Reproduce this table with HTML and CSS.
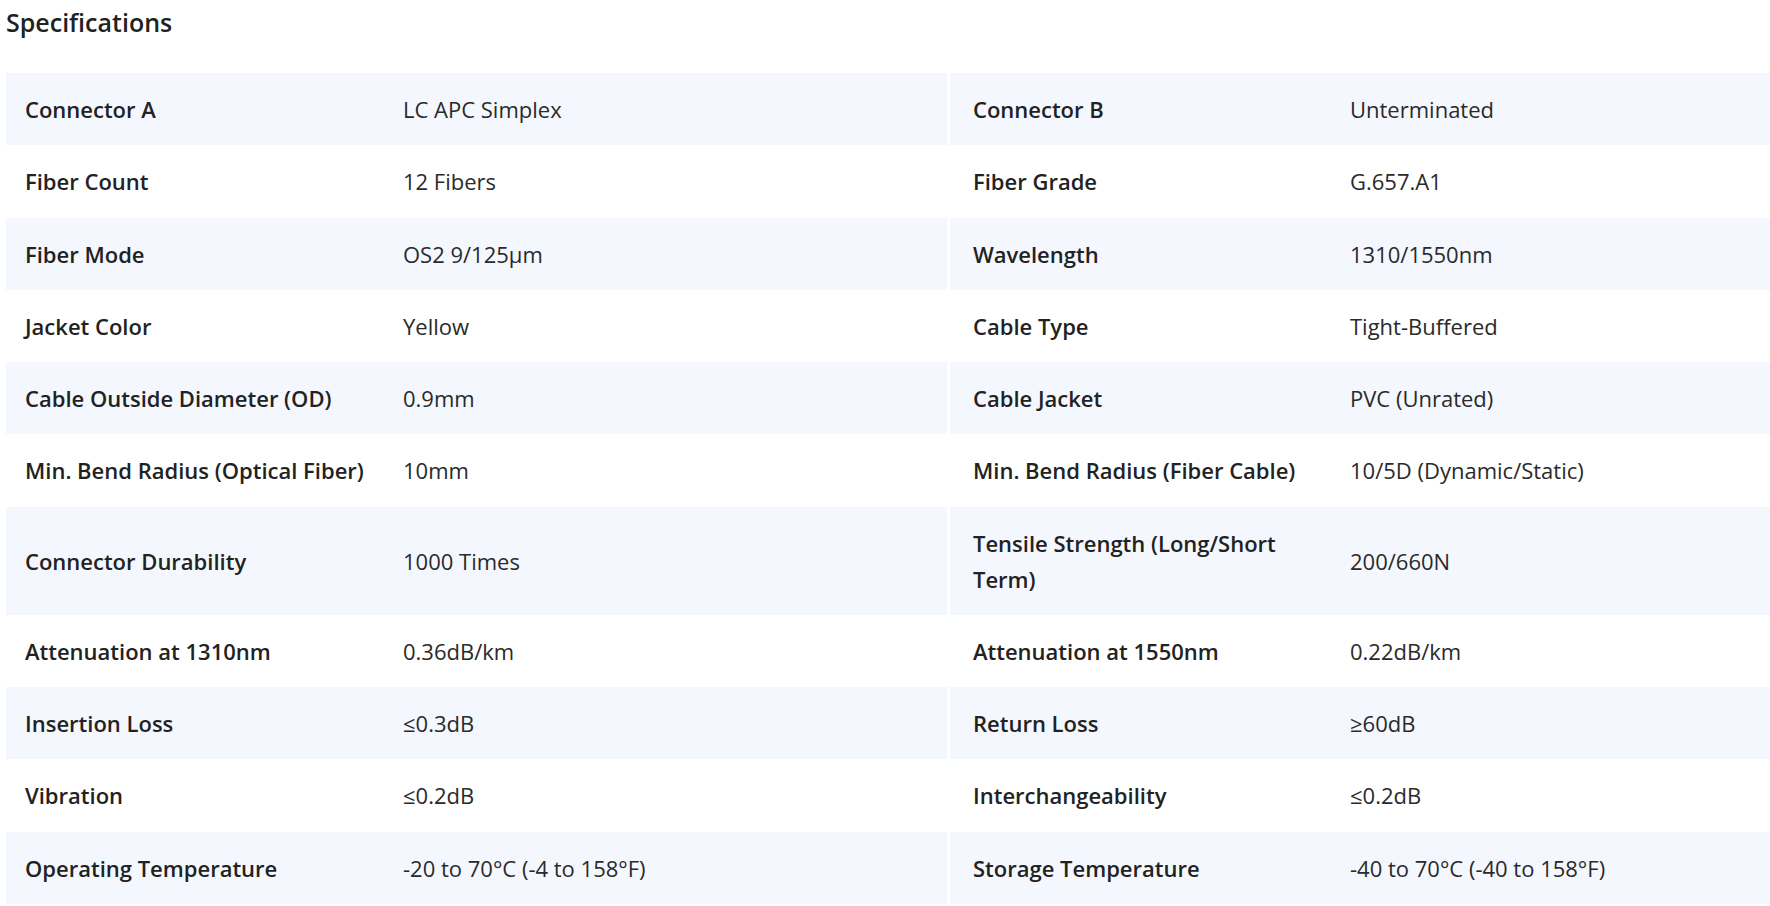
FILE: index.html
```html
<!DOCTYPE html>
<html lang="en">
<head>
<meta charset="utf-8">
<title>Specifications</title>
<link rel="stylesheet" href="styles.css">
</head>
<body>
<section class="specs">
  <h2 class="specs-title">Specifications</h2>
  <div class="spec-table">
    <div class="spec-row">
      <div class="cell label">Connector A</div><div class="cell value">LC APC Simplex</div>
      <div class="cell label right">Connector B</div><div class="cell value">Unterminated</div>
    </div>
    <div class="spec-row">
      <div class="cell label">Fiber Count</div><div class="cell value">12 Fibers</div>
      <div class="cell label right">Fiber Grade</div><div class="cell value">G.657.A1</div>
    </div>
    <div class="spec-row">
      <div class="cell label">Fiber Mode</div><div class="cell value">OS2 9/125μm</div>
      <div class="cell label right">Wavelength</div><div class="cell value">1310/1550nm</div>
    </div>
    <div class="spec-row">
      <div class="cell label">Jacket Color</div><div class="cell value">Yellow</div>
      <div class="cell label right">Cable Type</div><div class="cell value">Tight-Buffered</div>
    </div>
    <div class="spec-row">
      <div class="cell label">Cable Outside Diameter (OD)</div><div class="cell value">0.9mm</div>
      <div class="cell label right">Cable Jacket</div><div class="cell value">PVC (Unrated)</div>
    </div>
    <div class="spec-row">
      <div class="cell label">Min. Bend Radius (Optical Fiber)</div><div class="cell value">10mm</div>
      <div class="cell label right">Min. Bend Radius (Fiber Cable)</div><div class="cell value">10/5D (Dynamic/Static)</div>
    </div>
    <div class="spec-row">
      <div class="cell label">Connector Durability</div><div class="cell value">1000 Times</div>
      <div class="cell label right">Tensile Strength (Long/Short Term)</div><div class="cell value">200/660N</div>
    </div>
    <div class="spec-row">
      <div class="cell label">Attenuation at 1310nm</div><div class="cell value">0.36dB/km</div>
      <div class="cell label right">Attenuation at 1550nm</div><div class="cell value">0.22dB/km</div>
    </div>
    <div class="spec-row">
      <div class="cell label">Insertion Loss</div><div class="cell value">≤0.3dB</div>
      <div class="cell label right">Return Loss</div><div class="cell value">≥60dB</div>
    </div>
    <div class="spec-row">
      <div class="cell label">Vibration</div><div class="cell value">≤0.2dB</div>
      <div class="cell label right">Interchangeability</div><div class="cell value">≤0.2dB</div>
    </div>
    <div class="spec-row">
      <div class="cell label">Operating Temperature</div><div class="cell value">-20 to 70°C (-4 to 158°F)</div>
      <div class="cell label right">Storage Temperature</div><div class="cell value">-40 to 70°C (-40 to 158°F)</div>
    </div>
  </div>
</section>
</body>
</html>
```

FILE: styles.css
```css
html, body {
  margin: 0;
  padding: 0;
  background: #ffffff;
  overflow: hidden;
}

body {
  font-family: "Open Sans", "Noto Sans", "Liberation Sans", sans-serif;
  color: #222222;
}

.specs {
  padding: 7px 0 0 6px;
}

.specs-title {
  margin: 0;
  font-size: 25px;
  line-height: 30px;
  font-weight: 600;
  color: #222222;
  height: 66px;
}

.spec-table {
  display: flex;
  flex-direction: column;
}

.spec-row {
  display: grid;
  grid-template-columns: 378px 563px 381px 1fr;
}

.spec-row:nth-child(odd) {
  background: #f4f8fe;
}

.cell {
  display: flex;
  align-items: center;
  min-height: 72.25px;
  box-sizing: border-box;
  padding: 18px 19px;
  font-size: 22px;
  line-height: 36.2px;
}

.cell.label {
  font-weight: 600;
  color: #222222;
}

.cell.value {
  font-weight: 400;
  color: #2a2a2a;
}

.cell.right {
  border-left: 3px solid #ffffff;
  padding-left: 23px;
  padding-right: 23px;
}

.cell.right + .cell.value {
  padding-left: 22px;
}
```
